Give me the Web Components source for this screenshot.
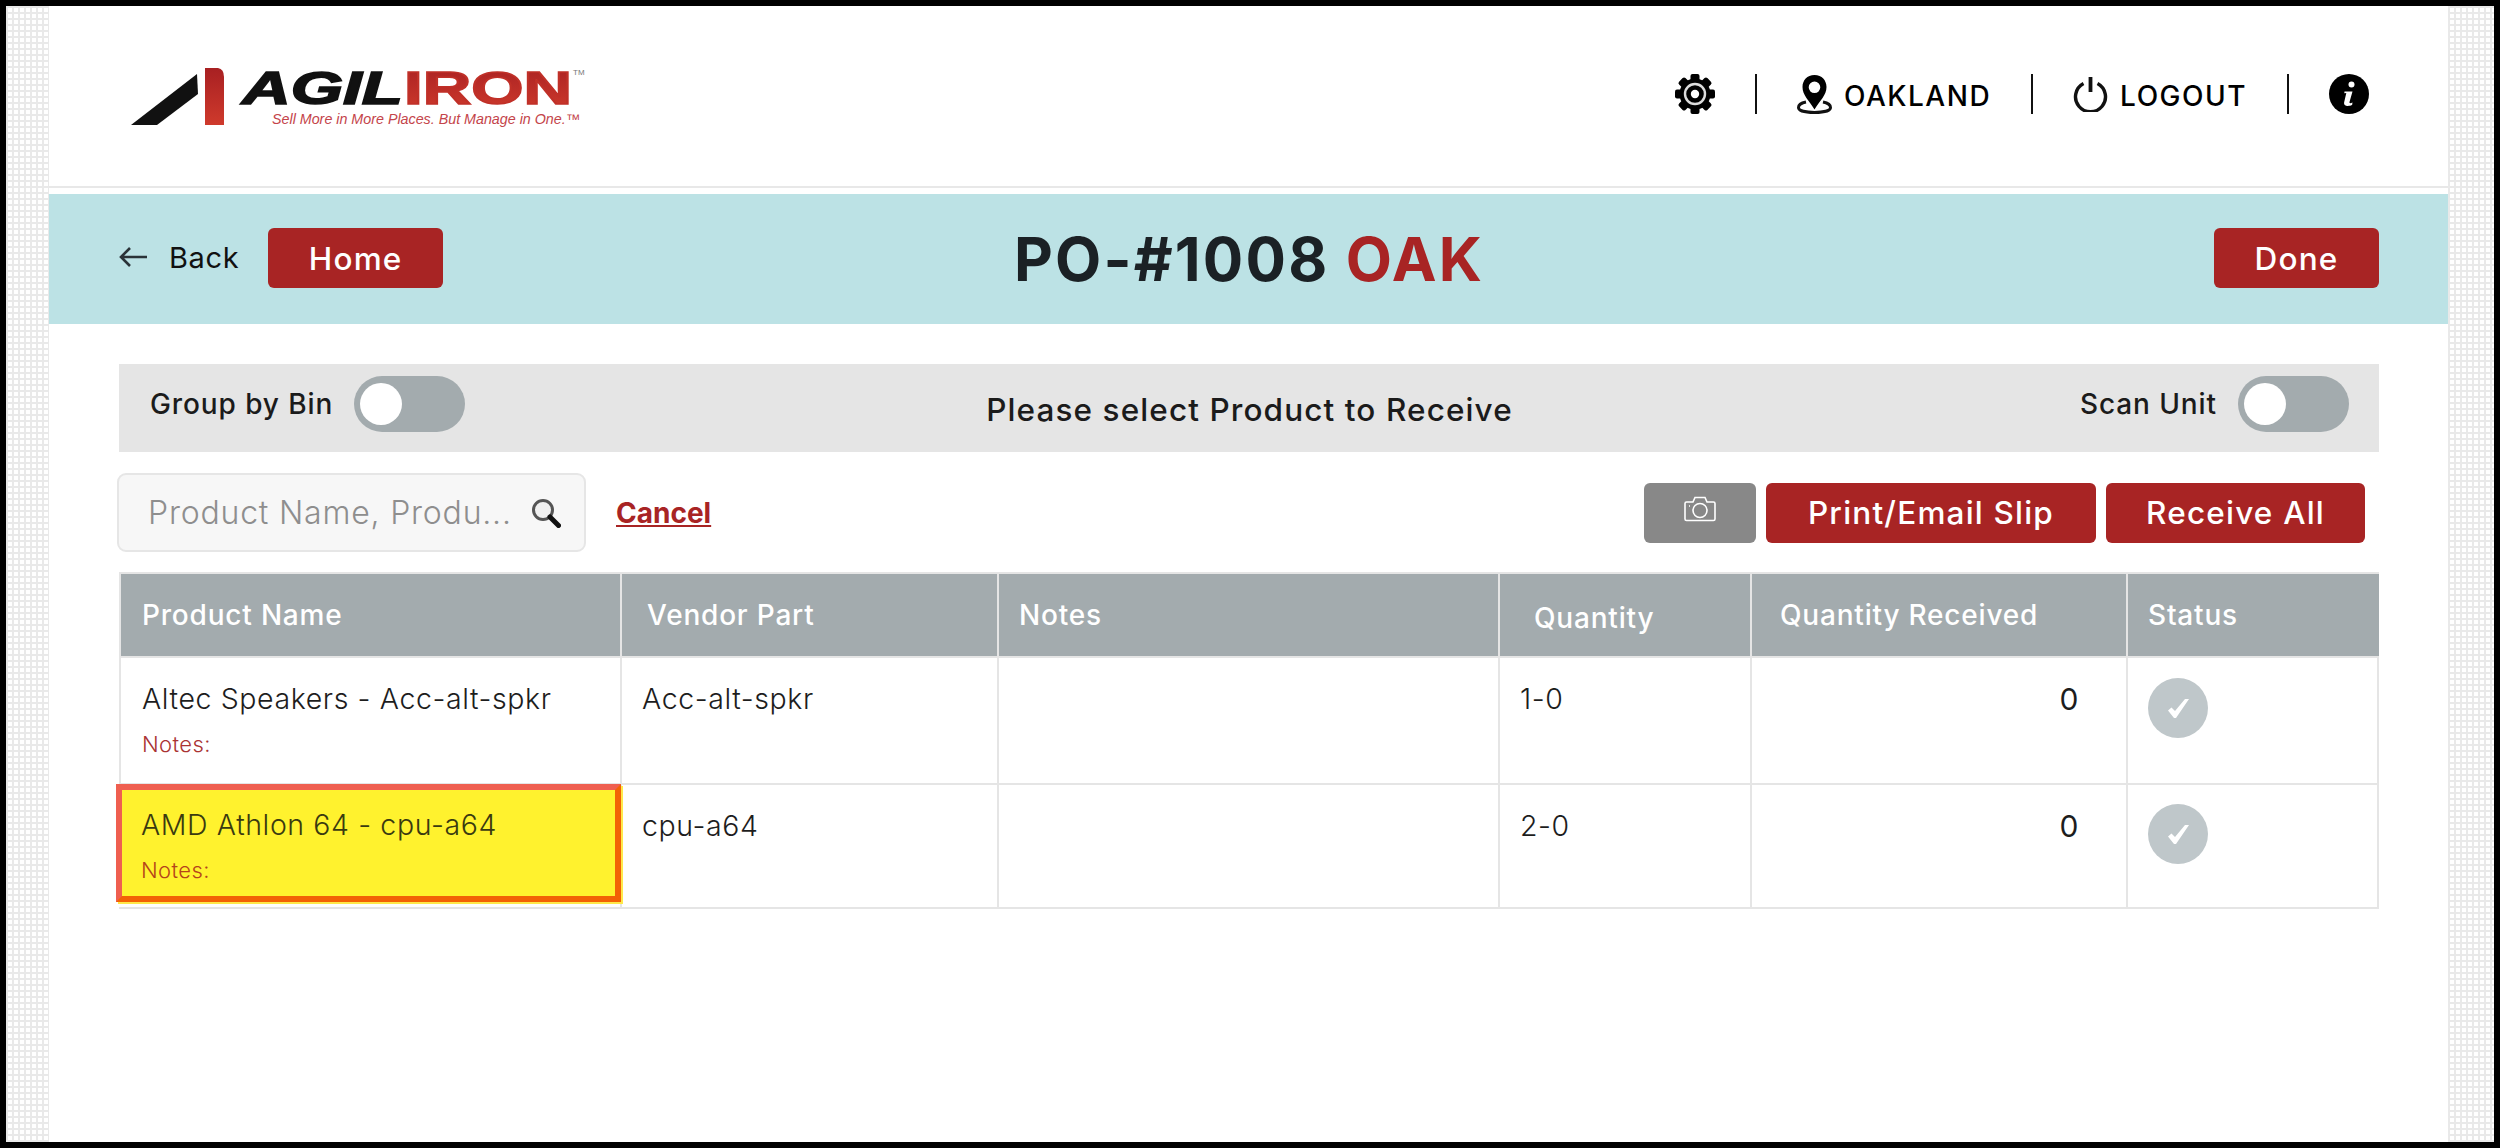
<!DOCTYPE html>
<html lang="en">
<head>
<meta charset="utf-8">
<title>PO-#1008 OAK</title>
<style>
  html, body { margin: 0; padding: 0; background: #000; }
  body { font-family: Inter, "Liberation Sans", sans-serif; color: #1d1d1d; }
</style>
</head>
<body>
<app-frame>
  <top-header></top-header>
  <title-bar></title-bar>
  <option-bar></option-bar>
  <action-bar></action-bar>
  <receive-table></receive-table>
</app-frame>

<script>
/**
 * Outer black frame, hatched side strips and the white page column.
 */
customElements.define('app-frame', class extends HTMLElement {
  constructor () {
    super()
    this.attachShadow({ mode: 'open' }).innerHTML = `
      <style>
        :host { display: block; box-sizing: border-box; height: 1148px; padding: 6px; background: #000; overflow: hidden; }
        .hatch {
          height: 100%;
          padding: 0 46px 0 43px;
          box-sizing: border-box;
          background-color: #fff;
          background-image:
            linear-gradient(#e9e9e9 2px, transparent 2px),
            linear-gradient(90deg, #e9e9e9 2px, transparent 2px);
          background-size: 6px 6px;
        }
        .page { height: 100%; background: #fff; }
      </style>
      <div class="hatch"><div class="page"><slot></slot></div></div>`
  }
})

customElements.define('top-header', class extends HTMLElement {
  constructor () {
    super()
    this.attachShadow({ mode: 'open' }).innerHTML = `
      <style>
        :host { display: flex; box-sizing: border-box; height: 182px; align-items: center; justify-content: space-between;
          padding: 0 79px 4px 76px; border-bottom: 2px solid #e8e8e8; margin-bottom: 6px; }
        .logo { display: block; width: 465px; height: 70px; margin-top: 3px; }
        nav { display: flex; align-items: center; gap: 40px; }
        .sep { width: 2px; height: 40px; background: #111; }
        .item { display: flex; align-items: center; gap: 12px; color: #000; font-size: 28px; font-weight: 500; letter-spacing: 1.5px; }
        .item span { padding-top: 3px; }
        svg.ic { display: block; }
      </style>
      <svg class="logo" viewBox="125 60 465 70" role="img" aria-label="AgilIron">
        <defs>
          <linearGradient id="red" x1="0" y1="0" x2="0" y2="1">
            <stop offset="0" stop-color="#a82022"/><stop offset="1" stop-color="#cf3a2c"/>
          </linearGradient>
        </defs>
        <polygon points="131,124 197,73 198,93 157,124" fill="#111"/>
        <path d="M205 67H218Q224 68 224 76V124H205Z" fill="url(#red)"/>
        <text x="242" y="103" font-family="Liberation Sans" font-weight="700" font-style="italic" font-size="46" textLength="161" lengthAdjust="spacingAndGlyphs" fill="#111" stroke="#111" stroke-width="1.6">AGIL</text>
        <text x="404" y="103" font-family="Liberation Sans" font-weight="700" font-size="46" textLength="168" lengthAdjust="spacingAndGlyphs" fill="url(#red)" stroke="#c03028" stroke-width="1.6">IRON</text>
        <text x="573" y="74" font-family="Liberation Sans" font-size="8" fill="#777">TM</text>
        <text x="272" y="123" font-family="Liberation Sans" font-style="italic" font-size="14" textLength="308" lengthAdjust="spacingAndGlyphs" fill="#c4444a">Sell More in More Places. But Manage in One.™</text>
      </svg>
      <nav>
        <svg class="ic" width="40" height="40" viewBox="0 0 40 40">
          <g fill="#000">
            <rect x="15.5" y="0" width="9" height="40" rx="2"/>
            <rect x="15.5" y="0" width="9" height="40" rx="2" transform="rotate(45 20 20)"/>
            <rect x="15.5" y="0" width="9" height="40" rx="2" transform="rotate(90 20 20)"/>
            <rect x="15.5" y="0" width="9" height="40" rx="2" transform="rotate(135 20 20)"/>
            <circle cx="20" cy="20" r="15.5"/>
          </g>
          <circle cx="20" cy="20" r="10" fill="none" stroke="#ddd" stroke-width="2.4"/>
          <circle cx="20" cy="20" r="4.2" fill="#fff"/>
        </svg>
        <div class="sep"></div>
        <div class="item">
          <svg class="ic" width="35" height="40" viewBox="0 0 35 40">
            <path fill-rule="evenodd" d="M17.5 1C10 1 5.500 6.500 5.500 13c0 8 6.500 13.500 12 22.500C23 26.500 29.500 21 29.500 13 29.500 6.500 25 1 17.500 1zm0 6.500a5.800 5.800 0 1 1 0 11.600 5.800 5.800 0 0 1 0-11.600z" fill="#000"/>
            <path d="M9 28C4 29 1.500 31 1.500 33.500 1.500 37 9 38.500 17.500 38.500S33.500 37 33.500 33.500C33.500 31 31 29 26 28" fill="none" stroke="#111" stroke-width="3"/>
          </svg>
          <span>OAKLAND</span>
        </div>
        <div class="sep"></div>
        <div class="item">
          <svg class="ic" width="35" height="36" viewBox="0 0 35 36">
            <path d="M10.500 7.500A15 15 0 1 0 24.500 7.500" fill="none" stroke="#111" stroke-width="3.400"/>
            <path d="M17.500 1V16" stroke="#111" stroke-width="3.800" fill="none"/>
          </svg>
          <span>LOGOUT</span>
        </div>
        <div class="sep"></div>
        <svg class="ic" width="40" height="40" viewBox="0 0 40 40">
          <circle cx="20" cy="20" r="20" fill="#000"/>
          <circle cx="22.500" cy="10.500" r="3" fill="#fff"/>
          <path d="M15.500 17.500h8L20.500 28c-.3 1.200.6 1.600 3 .6l-.4 2.400c-2 1-8.500 2.300-8-2.500l2.200-9.500-2 .2z" fill="#fff"/>
        </svg>
      </nav>`
  }
})

/**
 * Dark red button, also used for links that look like buttons.
 */
customElements.define('red-button', class extends HTMLElement {
  constructor () {
    super()
    this.attachShadow({ mode: 'open' }).innerHTML = `
      <style>
        :host { display: inline-flex; box-sizing: border-box; height: 60px; align-items: center; justify-content: center;
          background: var(--btn-bg, #a82424); border-radius: 6px; color: #fff;
          font-size: 31.5px; font-weight: 500; letter-spacing: 1.2px; white-space: nowrap; }
      </style>
      <slot></slot>`
  }
})

customElements.define('title-bar', class extends HTMLElement {
  constructor () {
    super()
    this.attachShadow({ mode: 'open' }).innerHTML = `
      <style>
        :host { display: grid; box-sizing: border-box; height: 130px; grid-template-columns: 1fr auto 1fr; align-items: center;
          padding: 0 69px 2px 70px; background: #bce2e5; }
        .left { display: flex; align-items: center; }
        .back { display: flex; align-items: center; gap: 21px; margin-right: 29px; margin-top: -2px; color: #111; font-size: 29px; letter-spacing: .6px; }
        h1 { margin: 0; padding-top: 2px; font-size: 60px; line-height: 1; font-weight: 700; letter-spacing: 2.2px; color: #1b2125; white-space: nowrap; }
        h1 b { color: #a82424; font-weight: 700; }
        .right { display: flex; justify-content: flex-end; }
      </style>
      <div class="left">
        <div class="back">
          <svg width="29" height="22" viewBox="0 0 29 22"><path d="M11 2 2 11l9 9M2 11h26" fill="none" stroke="#2a3338" stroke-width="2.600"/></svg>
          <span>Back</span>
        </div>
        <red-button style="width:175px">Home</red-button>
      </div>
      <h1>PO-#1008 <b>OAK</b></h1>
      <div class="right"><red-button style="width:165px">Done</red-button></div>`
  }
})

customElements.define('toggle-switch', class extends HTMLElement {
  constructor () {
    super()
    this.attachShadow({ mode: 'open' }).innerHTML = `
      <style>
        :host { display: flex; align-items: center; gap: 21px; padding-bottom: 8px; font-size: 28px; font-weight: 500; letter-spacing: .9px; color: #1b1b1b; white-space: nowrap; }
        .track { box-sizing: border-box; width: 111px; height: 56px; padding: 7px 6px; background: #a3abae; border-radius: 28px; }
        .knob { width: 42px; height: 42px; background: #fff; border-radius: 50%; }
      </style>
      <slot></slot>
      <div class="track"><div class="knob"></div></div>`
  }
})

customElements.define('option-bar', class extends HTMLElement {
  constructor () {
    super()
    this.attachShadow({ mode: 'open' }).innerHTML = `
      <style>
        :host { display: grid; box-sizing: border-box; height: 88px; grid-template-columns: 1fr auto 1fr; align-items: center;
          margin: 40px 69px 0 70px; padding: 0 30px 0 31px; background: #e5e5e5; }
        .msg { padding-top: 2px; font-size: 31.5px; font-weight: 500; letter-spacing: 1.1px; color: #1b1b1b; white-space: nowrap; }
        toggle-switch:last-child { justify-self: end; }
        toggle-switch:first-child { justify-self: start; }
      </style>
      <toggle-switch>Group by Bin</toggle-switch>
      <div class="msg">Please select Product to Receive</div>
      <toggle-switch>Scan Unit</toggle-switch>`
  }
})

customElements.define('search-box', class extends HTMLElement {
  constructor () {
    super()
    this.attachShadow({ mode: 'open' }).innerHTML = `
      <style>
        :host { display: flex; box-sizing: border-box; width: 469px; height: 79px; align-items: center; justify-content: space-between;
          padding: 0 23px 0 29px; background: #f7f7f7; border: 2px solid #e6e6e6; border-radius: 9px; }
        span { font-size: 32px; font-weight: 300; letter-spacing: .8px; color: #8e8e8e; white-space: nowrap; }
        svg { display: block; flex: none; }
      </style>
      <span>Product Name, Produ...</span>
      <svg width="30" height="30" viewBox="0 0 30 30">
        <circle cx="12" cy="12" r="9.500" fill="#f0f0f0" stroke="#555" stroke-width="3"/>
        <path d="M19 19l8.500 8.500" stroke="#111" stroke-width="5" stroke-linecap="round"/>
      </svg>`
  }
})

customElements.define('action-bar', class extends HTMLElement {
  constructor () {
    super()
    this.attachShadow({ mode: 'open' }).innerHTML = `
      <style>
        :host { display: flex; align-items: center; margin: 21px 83px 0 68px; }
        a { margin-left: 30px; color: #a82424; font-size: 28px; font-weight: 700; text-decoration: underline; }
        .btns { display: flex; gap: 10px; margin-left: auto; }
        .cam { --btn-bg: #888; width: 112px; }
        svg { display: block; margin-top: -8px; }
      </style>
      <search-box></search-box>
      <a>Cancel</a>
      <div class="btns">
        <red-button class="cam">
          <svg width="32" height="26" viewBox="0 0 32 26" fill="none" stroke="#fff" stroke-width="1.600">
            <path d="M2.500 6H9l2-4.500h10L23 6h6.500q1.500 0 1.500 1.500V23q0 1.500-1.500 1.500h-27Q1 24.500 1 23V7.500Q1 6 2.500 6z"/>
            <circle cx="16" cy="14.500" r="7"/>
            <path d="M5 10h1"/>
          </svg>
        </red-button>
        <red-button style="width:330px">Print/Email Slip</red-button>
        <red-button style="width:259px">Receive All</red-button>
      </div>`
  }
})

customElements.define('status-check', class extends HTMLElement {
  constructor () {
    super()
    this.attachShadow({ mode: 'open' }).innerHTML = `
      <style>
        :host { display: flex; width: 60px; height: 60px; align-items: center; justify-content: center; background: #bfc7ca; border-radius: 50%; }
        svg { display: block; }
      </style>
      <svg width="21" height="19" viewBox="0 0 21 19"><path d="M0 11.500 3.500 8.500 7 12 17 0h4L8 19H6z" fill="#fff"/></svg>`
  }
})

/**
 * The product table, rendered from a small list of rows.
 */
customElements.define('receive-table', class extends HTMLElement {
  constructor () {
    super()
    const rows = [
      { name: 'Altec Speakers - Acc-alt-spkr', part: 'Acc-alt-spkr', qty: '1-0', got: '0' },
      { name: 'AMD Athlon 64 - cpu-a64', part: 'cpu-a64', qty: '2-0', got: '0', active: true }
    ]
    const body = rows.map(row => `
      <div class="td first ${row.active ? 'active' : ''}"><div>${row.name}</div><div class="note">Notes:</div></div>
      <div class="td">${row.part}</div>
      <div class="td"></div>
      <div class="td qty">${row.qty}</div>
      <div class="td got">${row.got}</div>
      <div class="td st"><status-check></status-check></div>`).join('')
    this.attachShadow({ mode: 'open' }).innerHTML = `
      <style>
        :host { display: grid; box-sizing: border-box; grid-template-columns: 501px 377px 501px 252px 376px 253px;
          grid-template-rows: 84px 127px 122px; margin: 20px 69px 0 70px;
          border: solid #e5e5e5; border-width: 2px 2px 2px 0; width: 2260px; font-size: 28.5px; font-weight: 350; letter-spacing: .6px; color: #1d1d1d; }
        .th { display: flex; box-sizing: border-box; align-items: center; padding: 0 0 0 24px; background: #a3abae; color: #fff;
          border-left: 2px solid #e5e5e5; border-bottom: 2px solid #e5e5e5; font-size: 28px; font-weight: 500; letter-spacing: .8px; }
        .td { box-sizing: border-box; padding: 25px 0 0 20px; border-left: 2px solid #e5e5e5; border-bottom: 2px solid #e5e5e5; line-height: 32px; }
        .td:nth-last-child(-n+6) { border-bottom: 0; }
        .first { padding-left: 21px; }
        .note { margin-top: 13px; font-size: 22px; font-weight: 350; letter-spacing: .4px; color: #a33; }
        .got { padding-right: 47px; text-align: right; font-size: 30px; font-weight: 400; }
        .st { padding: 20px 0 0 20px; }
        .st:last-child { padding-top: 19px; }
        .td.first.active { position: relative; z-index: 1; height: 118px; margin: -1px -1px 0 -3px; padding: 19px 0 0 19px; background: #fff22e; color: #3a3a10;
          border: 6px solid; border-color: #ef5f50 #f26205 #f26205 #ef5f50; box-shadow: 2px 2px 0 #ffe94a; }
        .active .note { color: #b5431a; }
        .q { padding-top: 6px; }
      </style>
      <div class="th" style="padding-left:21px">Product Name</div>
      <div class="th" style="padding-left:25px">Vendor Part</div>
      <div class="th" style="padding-left:20px">Notes</div>
      <div class="th q" style="padding-left:34px">Quantity</div>
      <div class="th" style="padding-left:28px">Quantity Received</div>
      <div class="th" style="padding-left:20px">Status</div>
      ${body}`
  }
})
</script>
</body>
</html>
